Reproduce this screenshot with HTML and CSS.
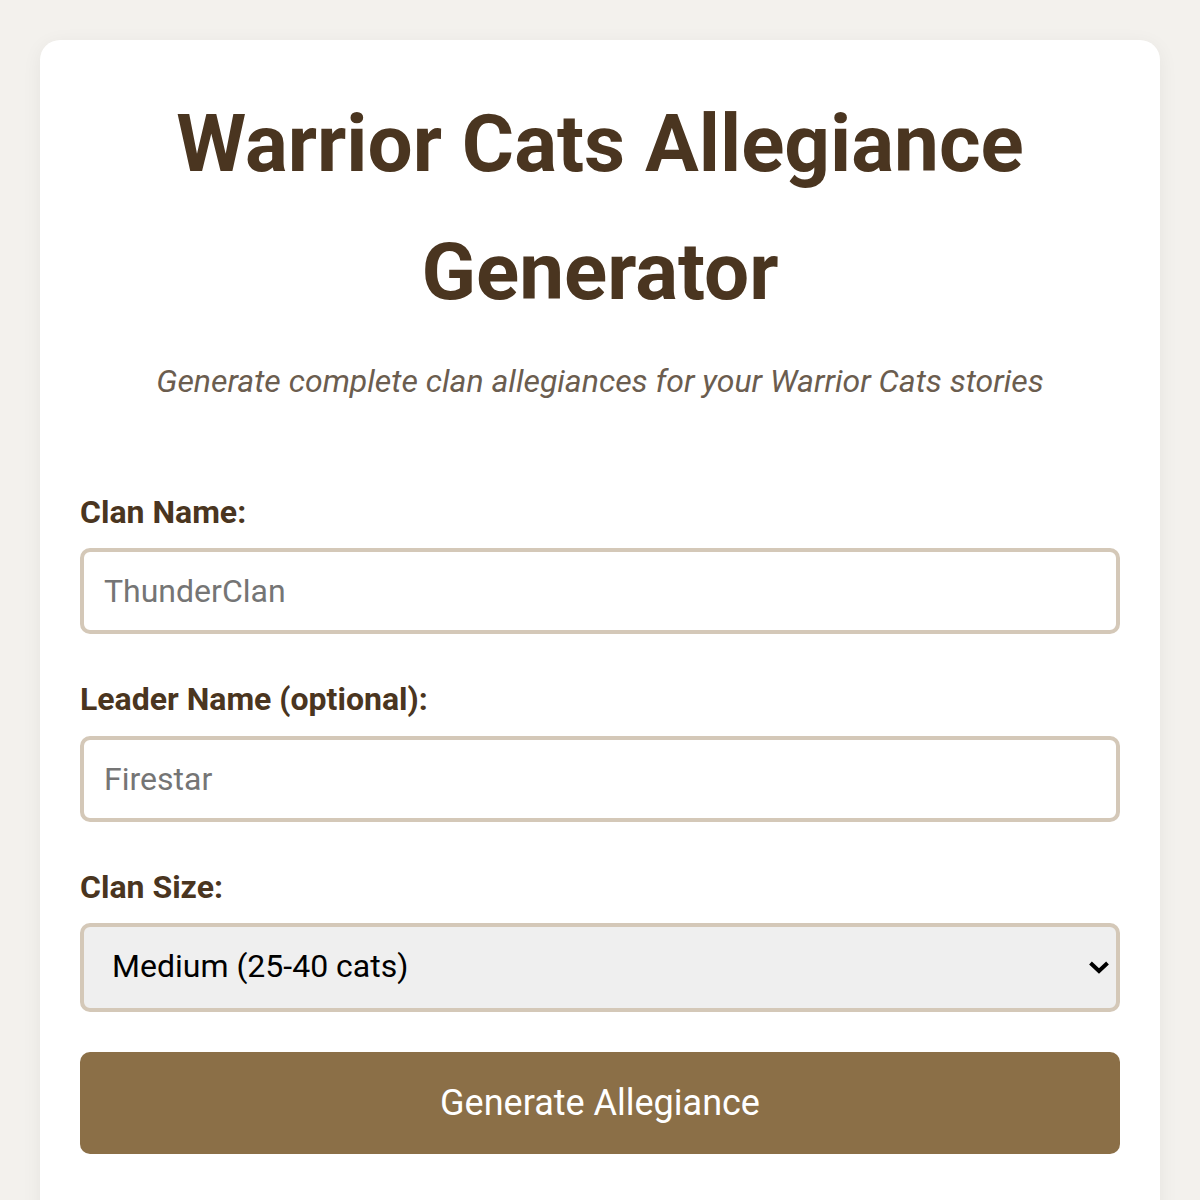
FILE: index.html
```html
<!DOCTYPE html>
<html lang="en">
<head>
<meta charset="utf-8">
<title>Warrior Cats Allegiance Generator</title>
<link rel="stylesheet" href="styles.css">
</head>
<body>
<div class="card">
  <h1 class="title">Warrior Cats Allegiance Generator</h1>
  <p class="subtitle">Generate complete clan allegiances for your Warrior Cats stories</p>
  <div class="form-group">
    <label class="label" for="clan">Clan Name:</label>
    <input class="field" id="clan" type="text" placeholder="ThunderClan">
  </div>
  <div class="form-group">
    <label class="label" for="leader">Leader Name (optional):</label>
    <input class="field" id="leader" type="text" placeholder="Firestar">
  </div>
  <div class="form-group">
    <label class="label" for="size">Clan Size:</label>
    <select class="field select" id="size">
      <option>Small (15-25 cats)</option>
      <option selected>Medium (25-40 cats)</option>
      <option>Large (40-60 cats)</option>
    </select>
  </div>
  <button class="btn" type="button">Generate Allegiance</button>
</div>
</body>
</html>
```

FILE: styles.css
```css
html, body {
  margin: 0;
  padding: 0;
}
body {
  background: #f3f1ed;
  font-family: Roboto, "Liberation Sans", sans-serif;
  line-height: 1.6;
  padding: 40px;
}
.card {
  background: #ffffff;
  border-radius: 20px;
  box-shadow: 0 4px 20px rgba(0, 0, 0, 0.06);
  padding: 40px;
  min-height: 1200px;
}
.title {
  margin: 0;
  font-size: 80px;
  line-height: 1.6;
  font-weight: 700;
  color: #4a3520;
  text-align: center;
}
.subtitle {
  margin: 20px 0 80px;
  font-size: 32px;
  font-style: italic;
  color: #6b5d4f;
  text-align: center;
}
.form-group {
  margin-bottom: 40px;
}
.form-group-last {
  margin-bottom: 40px;
}
.label {
  display: block;
  font-size: 32px;
  font-weight: 700;
  color: #4a3520;
  margin-bottom: 10px;
}
.field {
  display: block;
  width: 100%;
  box-sizing: border-box;
  padding: 20px;
  border: 4px solid #d4c8b8;
  border-radius: 10px;
  font-family: Roboto, "Liberation Sans", sans-serif;
  font-size: 32px;
  color: #000;
  background: #fff;
  outline: none;
}
.field::placeholder {
  color: #757575;
}
.select {
  -webkit-appearance: none;
  appearance: none;
  height: 89px;
  padding: 0 60px 0 28px;
  line-height: 1.3;
  background-color: #efefef;
  background-image: url("data:image/svg+xml,%3Csvg xmlns='http://www.w3.org/2000/svg' width='20' height='14' viewBox='0 0 20 14'%3E%3Cpath d='M1.5 3 L10 11 L18.5 3' fill='none' stroke='%23000' stroke-width='4'/%3E%3C/svg%3E");
  background-repeat: no-repeat;
  background-position: right 7px center;
  background-size: 20px 14px;
}
.btn {
  display: block;
  width: 100%;
  padding: 30px;
  border: none;
  border-radius: 10px;
  background: #8b6f47;
  color: #fff;
  font-family: Roboto, "Liberation Sans", sans-serif;
  font-size: 36px;
  cursor: pointer;
}
```
